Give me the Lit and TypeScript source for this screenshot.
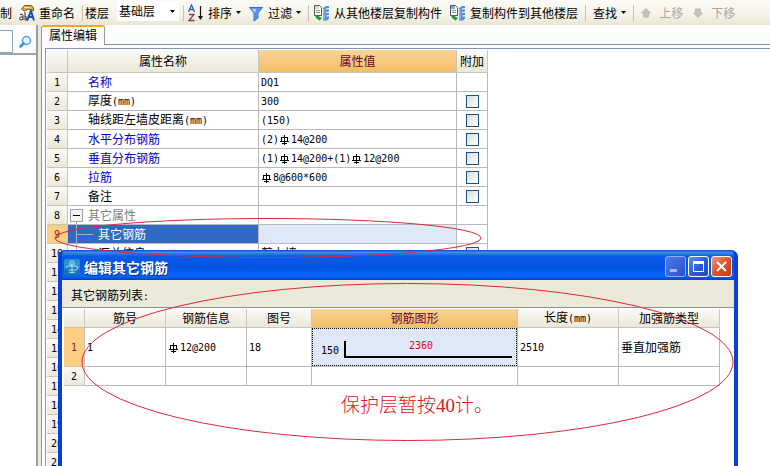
import { LitElement, html, svg, css, nothing } from "lit";
import { customElement, property } from "lit/decorators.js";
import { classMap } from "lit/directives/class-map.js";

// Steel grade mark (HRB335) that stands in front of a bar diameter.
const gradeMark = html`<svg class="grade" viewBox="0 0 12 12" role="img" aria-label="HRB335">
  <path d="M5.5 1v10M2.5 8V3.5h6V8M1 7.500h9M3 9.500h5" fill="none" stroke="currentColor" />
</svg>`;

// Splits a string so that Latin runs get the half-width face and "#" the grade mark.
const mixed = (text: string) =>
  text
    .split(/(#|[\x20-\x22\x24-\x7e]+)/)
    .filter((t) => t)
    .map((t) =>
      t === "#" ? gradeMark : /^[\x20-\x7e]+$/.test(t) ? html`<span class="half">${t}</span>` : t
    );

const shared = css`
  * {
    box-sizing: border-box;
  }
  .half {
    font-family: "DejaVu Sans Mono", monospace;
    font-size: 10px;
  }
  .grade {
    width: 12px;
    height: 12px;
    vertical-align: -3px;
    shape-rendering: crispEdges;
  }
  table {
    border-collapse: separate;
    border-spacing: 0;
    table-layout: fixed;
    font-size: 12px;
    line-height: 16px;
  }
  th,
  td {
    padding: 0 2px;
    border-right: 1px solid #b9b9bd;
    border-bottom: 1px solid #b9b9bd;
    font-weight: 400;
    text-align: left;
    white-space: nowrap;
    overflow: hidden;
    background: #fff;
  }
  th {
    padding: 0;
    text-align: center;
    background: linear-gradient(#fbfaf6, #ebe8da);
    border-color: #c9c6b8;
  }
  th.hot {
    color: #6e0030;
    background: linear-gradient(#f9d597, #f2be66);
  }
  th.hotrow {
    color: #7a2a20;
    background: #ffce85;
  }
`;

interface Prop {
  name?: string;
  value?: string;
  link?: boolean;
  check?: boolean;
  kind?: "group" | "child" | "active";
}

const PROPS: Prop[] = [
  { name: "名称", value: "DQ1", link: true },
  { name: "厚度(mm)", value: "300", check: true },
  { name: "轴线距左墙皮距离(mm)", value: "(150)", check: true },
  { name: "水平分布钢筋", value: "(2)#14@200", link: true, check: true },
  { name: "垂直分布钢筋", value: "(1)#14@200+(1)#12@200", link: true, check: true },
  { name: "拉筋", value: "#8@600*600", link: true, check: true },
  { name: "备注", check: true },
  { name: "其它属性", kind: "group" },
  { name: "其它钢筋", kind: "active" },
  { name: "汇总信息", value: "剪力墙", kind: "child", check: true },
  ...Array.from({ length: 11 }, () => ({ kind: "child" }) as Prop),
];

@customElement("property-grid")
export class PropertyGrid extends LitElement {
  static styles = [
    shared,
    css`
      :host {
        display: block;
      }
      table {
        width: 441px;
      }
      .c-num {
        width: 21px;
      }
      .c-name {
        width: 191px;
      }
      .c-value {
        width: 198px;
      }
      .c-extra {
        width: 31px;
      }
      thead tr {
        height: 23px;
      }
      tbody tr {
        height: 19px;
      }
      .name {
        padding: 0 0 0 20px;
      }
      .link {
        color: #0000c8;
      }
      .group,
      .child,
      .active {
        padding: 0;
      }
      .group {
        color: #808080;
      }
      .active {
        color: #fff;
        background: #316ac5;
      }
      .activevalue {
        background: #dfe8f6;
      }
      .branch {
        display: flex;
        align-items: center;
        height: 18px;
      }
      .branch svg {
        width: 30px;
        height: 18px;
        flex: none;
        shape-rendering: crispEdges;
      }
      .group .branch svg {
        width: 20px;
      }
      .center {
        text-align: center;
        padding: 0;
      }
      input {
        appearance: none;
        display: block;
        width: 13px;
        height: 13px;
        margin: 0 auto;
        border: 1px solid #1c5180;
        background: linear-gradient(135deg, #dcdcd7, #fff);
      }
    `,
  ];

  private nameCell(p: Prop) {
    if (!p.kind) return mixed(p.name ?? "");
    const art =
      p.kind === "group"
        ? svg`<rect x="2.5" y="3.5" width="12" height="12" fill="#f4f4f4" stroke="#a0a0a0"/>
            <path d="M5 9.5h7" stroke="#000"/><path d="M8.5 16v2" stroke="#a0a0a0"/>`
        : svg`<path d="M8.5 0v18M9 9.5h16" stroke="#a9b4c4" fill="none"/>`;
    return html`<div class="branch">
      <svg viewBox=${p.kind === "group" ? "0 0 20 18" : "0 0 30 18"} aria-hidden="true">${art}</svg>${p.name}
    </div>`;
  }

  render() {
    return html`<table>
      <colgroup>
        <col class="c-num" />
        <col class="c-name" />
        <col class="c-value" />
        <col class="c-extra" />
      </colgroup>
      <thead>
        <tr>
          <th></th>
          <th scope="col">属性名称</th>
          <th scope="col" class="hot">属性值</th>
          <th scope="col">附加</th>
        </tr>
      </thead>
      <tbody>
        ${PROPS.map(
          (p, i) => html`<tr>
            <th scope="row" class=${classMap({ hotrow: p.kind === "active" })}>${mixed(String(i + 1))}</th>
            <td class=${classMap({ name: !p.kind, link: !!p.link, [p.kind ?? "plain"]: true })}>
              ${this.nameCell(p)}
            </td>
            <td class=${classMap({ activevalue: p.kind === "active" })}>${mixed(p.value ?? "")}</td>
            <td class="center">
              ${p.check ? html`<input type="checkbox" aria-label="附加 ${p.name}" />` : nothing}
            </td>
          </tr>`
        )}
      </tbody>
    </table>`;
  }
}

@customElement("rebar-dialog")
export class RebarDialog extends LitElement {
  static styles = [
    shared,
    css`
      :host {
        display: flex;
        flex-direction: column;
        box-sizing: border-box;
        border: solid #0a3fd6;
        border-width: 0 4px;
        border-radius: 7px 7px 0 0;
        overflow: hidden;
        background: #0a4fe4;
      }
      .title {
        display: flex;
        align-items: center;
        gap: 2px;
        height: 30px;
        flex: none;
        margin: 0 -4px;
        padding: 3px 6px 0;
        background: linear-gradient(#0a4bd0, #3b8cf8 8%, #0a5ae8 20%, #0453e2 55%, #0566fa 88%, #0340c0);
      }
      .title > svg {
        width: 16px;
        height: 16px;
      }
      h1 {
        flex: 1;
        margin: 0 0 0 2px;
        color: #fff;
        font-size: 14px;
        line-height: 20px;
        font-weight: 700;
        text-shadow: 1px 1px 0 #0a2a80;
      }
      button {
        width: 21px;
        height: 21px;
        padding: 0;
        border: 1px solid #fff;
        border-radius: 3px;
        background: linear-gradient(135deg, #5f8ff0, #2457d8 60%, #1c4cc8);
      }
      button svg {
        display: block;
        width: 19px;
        height: 19px;
      }
      .dim {
        border-color: #8fb0f4;
        background: linear-gradient(135deg, #4c7ae8, #2a50cc);
      }
      .close {
        background: linear-gradient(135deg, #f09a80, #e0512c 50%, #c83a14);
      }
      .caption {
        height: 27px;
        flex: none;
        padding: 6px 9px 0;
        background: #ece9d8;
        font-size: 12px;
        line-height: 18px;
      }
      .body {
        flex: 1;
        padding: 1px 0 0 2px;
        border-top: 1px solid #8a9099;
        background: #fff;
        overflow: hidden;
      }
      table {
        width: 656px;
      }
      .w21 {
        width: 21px;
      }
      .w81 {
        width: 81px;
      }
      .w65 {
        width: 65px;
      }
      .w206 {
        width: 206px;
      }
      .w101 {
        width: 101px;
      }
      tr {
        height: 19px;
      }
      .tall {
        height: 39px;
      }
      .shape {
        padding: 0;
        background: #dfe8f6;
      }
      .shape svg {
        display: block;
        width: 205px;
        height: 38px;
        outline: 1px dotted #000;
        outline-offset: -1px;
      }
    `,
  ];

  render() {
    return html`
      <div class="title">
        <svg viewBox="0 0 16 16" aria-hidden="true">
          <rect width="16" height="16" rx="2" fill="#2a93cf" />
          <path d="M0 10q8-3 16 0v4q0 2-2 2H2q-2 0-2-2z" fill="#1b74b4" />
          <path
            d="M8 4v10M6 6V3.500q0-1.500 2-1.500t2 1.500V6M6 6h2M2.500 9q0-2 2-2h7q2 0 2 2t-2 2h-7M5 13q3 2 6 0"
            fill="none"
            stroke="#a9e2f4"
          />
        </svg>
        <h1>编辑其它钢筋</h1>
        <button class="dim" aria-label="最小化">
          <svg viewBox="0 0 19 19"><path d="M4 12h7v3H4z" fill="#9db8f5" /></svg>
        </button>
        <button aria-label="最大化">
          <svg viewBox="0 0 19 19"><path d="M4 4h11v11H4zM5 7v7h9V7z" fill="#fff" fill-rule="evenodd" /></svg>
        </button>
        <button class="close" aria-label="关闭">
          <svg viewBox="0 0 19 19"><path d="M5 5l9 9M14 5l-9 9" stroke="#fff" stroke-width="2" /></svg>
        </button>
      </div>
      <div class="caption">其它钢筋列表<span class="half">:</span></div>
      <div class="body">
        <table>
          <colgroup>
            <col class="w21" />
            <col class="w81" />
            <col class="w81" />
            <col class="w65" />
            <col class="w206" />
            <col class="w101" />
            <col class="w101" />
          </colgroup>
          <thead>
            <tr>
              <th></th>
              <th scope="col">筋号</th>
              <th scope="col">钢筋信息</th>
              <th scope="col">图号</th>
              <th scope="col" class="hot">钢筋图形</th>
              <th scope="col">${mixed("长度(mm)")}</th>
              <th scope="col">加强筋类型</th>
            </tr>
          </thead>
          <tbody>
            <tr class="tall">
              <th scope="row" class="hotrow">${mixed("1")}</th>
              <td>${mixed("1")}</td>
              <td>${mixed("#12@200")}</td>
              <td>${mixed("18")}</td>
              <td class="shape">
                <svg viewBox="0 0 205 38">
                  <path d="M33 13v17M33 29h167" fill="none" stroke="#000" stroke-width="2" shape-rendering="crispEdges" />
                  <text class="half" x="9" y="26">150</text>
                  <text class="half" x="97" y="21" fill="#e00020">2360</text>
                </svg>
              </td>
              <td>${mixed("2510")}</td>
              <td>垂直加强筋</td>
            </tr>
            <tr>
              <th scope="row">${mixed("2")}</th>
              <td></td>
              <td></td>
              <td></td>
              <td></td>
              <td></td>
              <td></td>
            </tr>
          </tbody>
        </table>
      </div>
    `;
  }
}

const caret = html`<svg class="caret" viewBox="0 0 5 3" aria-hidden="true"><path d="M0 0h5L2.500 3z" /></svg>`;

const renameIcon = html`<svg class="i16" viewBox="0 0 16 18" aria-hidden="true">
  <path d="M2.500 5l3-3.500h7l2 2V7l-5-2-4 2z" fill="#d9a63a" stroke="#7a5a1c" />
  <path d="M5 3.500h5l3 1.500" stroke="#fbe9a0" fill="none" />
  <path d="M1 10.500q3-1 3 1V16M4 13H2.500q-2 0-2 1.500T2 16t2-1M6 8v8h1.500q1.500-3-1.500-4" fill="none" stroke="#333" />
  <path d="M8 16.500L12 7l3 9.500M9.500 13h5" fill="none" stroke="#1d4fb4" stroke-width="2" />
</svg>`;

const sortIcon = html`<svg class="i16" viewBox="0 0 16 18" aria-hidden="true">
  <path d="M.5 8L3.500 1 6.500 8M1.500 5.500h4" fill="none" stroke="#2c5fc0" stroke-width="1.300" />
  <path d="M1 10.500h5L1 16.500h5.500" fill="none" stroke="#a03048" stroke-width="1.300" />
  <path d="M12.500 2v13" stroke="#111" stroke-width="1.200" />
  <path d="M10 12h5l-2.500 4z" fill="#111" />
</svg>`;

const filterIcon = html`<svg class="i16" viewBox="0 0 16 18" aria-hidden="true">
  <path d="M1.500 3.500h13L10 9v5l-4 3V9z" fill="#5b90ee" stroke="#3a6cd0" />
  <path d="M4 5h4L7 9z" fill="#c4dafc" />
</svg>`;

const copyIcon = (page: string) => html`<svg class="i17" viewBox="0 0 17 18" aria-hidden="true">
  <path d="M1.500 1.500h5l2 2v8h-7z" fill="#fff" stroke="#555" />
  <path d="M2 2h4v3H2z" fill=${page} />
  <path d="M3 6.500h4M3 8.500h4" stroke="#888" />
  <path d="M2 11l3 1 1-1v1.500L9 14l-3 3v-1.500q-3 0-4-4.500z" fill="#1c9440" />
  <path
    d="M10 4l3-2h3v2l-3 .5v1h3v2l-3 .5v1h3v2l-3 .5v1h3v2l-2 2h-4z"
    fill="#4f8fdc"
  />
  <path d="M11 5v10" stroke="#b6d6f8" />
</svg>`;

const arrowIcon = (down: boolean) => html`<svg class="i10" viewBox="0 0 10 10" aria-hidden="true">
  <path d=${down ? "M5 9.500L.5 5h2V1h5v4h2z" : "M5 .5L.5 5h2v4h5V5h2z"} fill="#c4c4bc" stroke="#bcbcb4" />
</svg>`;

@customElement("app-root")
export class AppRoot extends LitElement {
  @property({ type: String }) floor = "基础层";

  static styles = css`
    * {
      box-sizing: border-box;
    }
    :host {
      display: flex;
      flex-direction: column;
      position: relative;
      height: 100vh;
      overflow: hidden;
      background: #fcfcfe;
      color: #000;
      font-family: "Noto Sans CJK SC", sans-serif;
      font-size: 12px;
      line-height: 16px;
    }
    .bar {
      display: flex;
      align-items: center;
      flex: none;
      height: 25px;
      white-space: nowrap;
      overflow: hidden;
      background: linear-gradient(#fbfaf6, #f5f3e8 60%, #e9e6d4);
    }
    .bar button {
      display: flex;
      align-items: center;
      gap: 4px;
      flex: none;
      padding: 0;
      margin: 0 0 0 7px;
      border: 0;
      background: none;
      color: inherit;
      font: inherit;
    }
    .bar .first {
      margin: 0;
    }
    .bar .tight {
      margin-left: 4px;
    }
    .bar button:disabled {
      gap: 8px;
      color: #aca899;
    }
    .bar .far {
      margin-left: 10px;
    }
    .sep {
      flex: none;
      width: 1px;
      height: 16px;
      margin-left: 7px;
      background: #c5c2b2;
    }
    .sep.short {
      margin-left: 4px;
    }
    .i16 {
      width: 16px;
      height: 18px;
    }
    .i17 {
      width: 17px;
      height: 18px;
    }
    .i10 {
      width: 10px;
      height: 10px;
    }
    .caret {
      width: 5px;
      height: 3px;
    }
    label {
      flex: none;
      margin-left: 2px;
    }
    .combo {
      display: flex;
      align-items: center;
      flex: none;
      width: 62px;
      height: 20px;
      margin: 0 0 3px 8px;
      padding-right: 4px;
      background: #fff;
    }
    select {
      appearance: none;
      flex: 1;
      min-width: 0;
      height: 18px;
      padding: 0 0 0 2px;
      border: 0;
      background: none;
      color: inherit;
      font: inherit;
    }
    .main {
      display: flex;
      flex: 1;
      min-height: 0;
    }
    .side {
      display: flex;
      flex-direction: column;
      flex: none;
      width: 38px;
      border-right: 2px solid #98a0a8;
    }
    .search {
      display: flex;
      align-items: center;
      gap: 5px;
      height: 30px;
      padding-top: 5px;
      border-bottom: 2px solid #98a4b0;
    }
    .search input {
      width: 13px;
      height: 23px;
      min-width: 0;
      padding: 0;
      border: 1px solid #8fa6bd;
      border-left: 0;
      background: #fff;
    }
    .search button {
      padding: 0;
      border: 0;
      background: none;
    }
    .search svg {
      display: block;
      width: 14px;
      height: 14px;
    }
    .list {
      flex: 1;
      background: #fff;
    }
    .split {
      flex: none;
      width: 3px;
      background: #ece9d8;
    }
    .pane {
      display: flex;
      flex-direction: column;
      flex: 1;
      min-width: 0;
    }
    .tabs {
      display: flex;
      height: 20px;
      flex: none;
    }
    .tabs button {
      width: 64px;
      padding: 0 0 2px;
      border: 1px solid #919b9c;
      border-top: 2px solid #f5a623;
      border-bottom: 0;
      border-radius: 3px 3px 0 0;
      background: #fcfcfe;
      color: inherit;
      font: inherit;
    }
    .tabs span {
      flex: 1;
      border-bottom: 1px solid #8795a8;
    }
    .page {
      flex: 1;
      min-height: 0;
      padding: 3px 0 0 3px;
      border-left: 1px solid #8795a8;
    }
    .frame {
      height: 100%;
      padding: 1px;
      border: solid #7f95b5;
      border-width: 1px 0 0 1px;
      overflow: hidden;
      background: #fff;
    }
    .dialog {
      position: absolute;
      top: 250px;
      left: 58px;
      right: 32px;
      bottom: 0;
    }
    .marks {
      position: absolute;
      top: 0;
      left: 0;
      width: 770px;
      height: 466px;
      pointer-events: none;
    }
    .note {
      position: absolute;
      top: 393px;
      left: 341px;
      margin: 0;
      color: #e0141e;
      font-family: "Liberation Serif", "Noto Sans CJK SC", serif;
      font-size: 19px;
      line-height: 26px;
      font-weight: 300;
      white-space: nowrap;
    }
  `;

  render() {
    return html`
      <div class="bar" role="toolbar">
        <button class="first">制</button>
        <button>${renameIcon}重命名</button>
        <span class="sep"></span>
        <label for="floor">楼层</label>
        <span class="combo">
          <select id="floor">
            <option>${this.floor}</option>
          </select>
          ${caret}
        </span>
        <span class="sep short"></span>
        <button class="tight">${sortIcon}排序 ${caret}</button>
        <button>${filterIcon}过滤 ${caret}</button>
        <span class="sep"></span>
        <button class="tight">${copyIcon("#d8d8d8")}从其他楼层复制构件</button>
        <button>${copyIcon("#7fa8f0")}复制构件到其他楼层</button>
        <span class="sep"></span>
        <button>查找 ${caret}</button>
        <span class="sep"></span>
        <button disabled>${arrowIcon(false)}上移</button>
        <button class="far" disabled>${arrowIcon(true)}下移</button>
      </div>
      <div class="main">
        <div class="side">
          <div class="search">
            <input type="text" aria-label="搜索" />
            <button aria-label="搜索">
              <svg viewBox="0 0 14 14">
                <circle cx="8.500" cy="5.500" r="4" fill="#eaf6ff" stroke="#4aa3e8" stroke-width="1.500" />
                <path d="M5.500 8.500L2.500 11.500" stroke="#3b8edc" stroke-width="2.500" stroke-linecap="round" />
              </svg>
            </button>
          </div>
          <div class="list"></div>
        </div>
        <div class="split"></div>
        <div class="pane">
          <div class="tabs"><button role="tab" aria-selected="true">属性编辑</button><span></span></div>
          <div class="page">
            <div class="frame"><property-grid></property-grid></div>
          </div>
        </div>
      </div>
      <rebar-dialog class="dialog" role="dialog"></rebar-dialog>
      <svg class="marks" viewBox="0 0 770 466" aria-hidden="true">
        <g fill="none" stroke="#dc2838">
          <ellipse cx="268" cy="238" rx="213" ry="19.500" />
          <ellipse cx="407.500" cy="362" rx="325.500" ry="78.500" />
        </g>
      </svg>
      <p class="note">保护层暂按40计。</p>
    `;
  }
}
